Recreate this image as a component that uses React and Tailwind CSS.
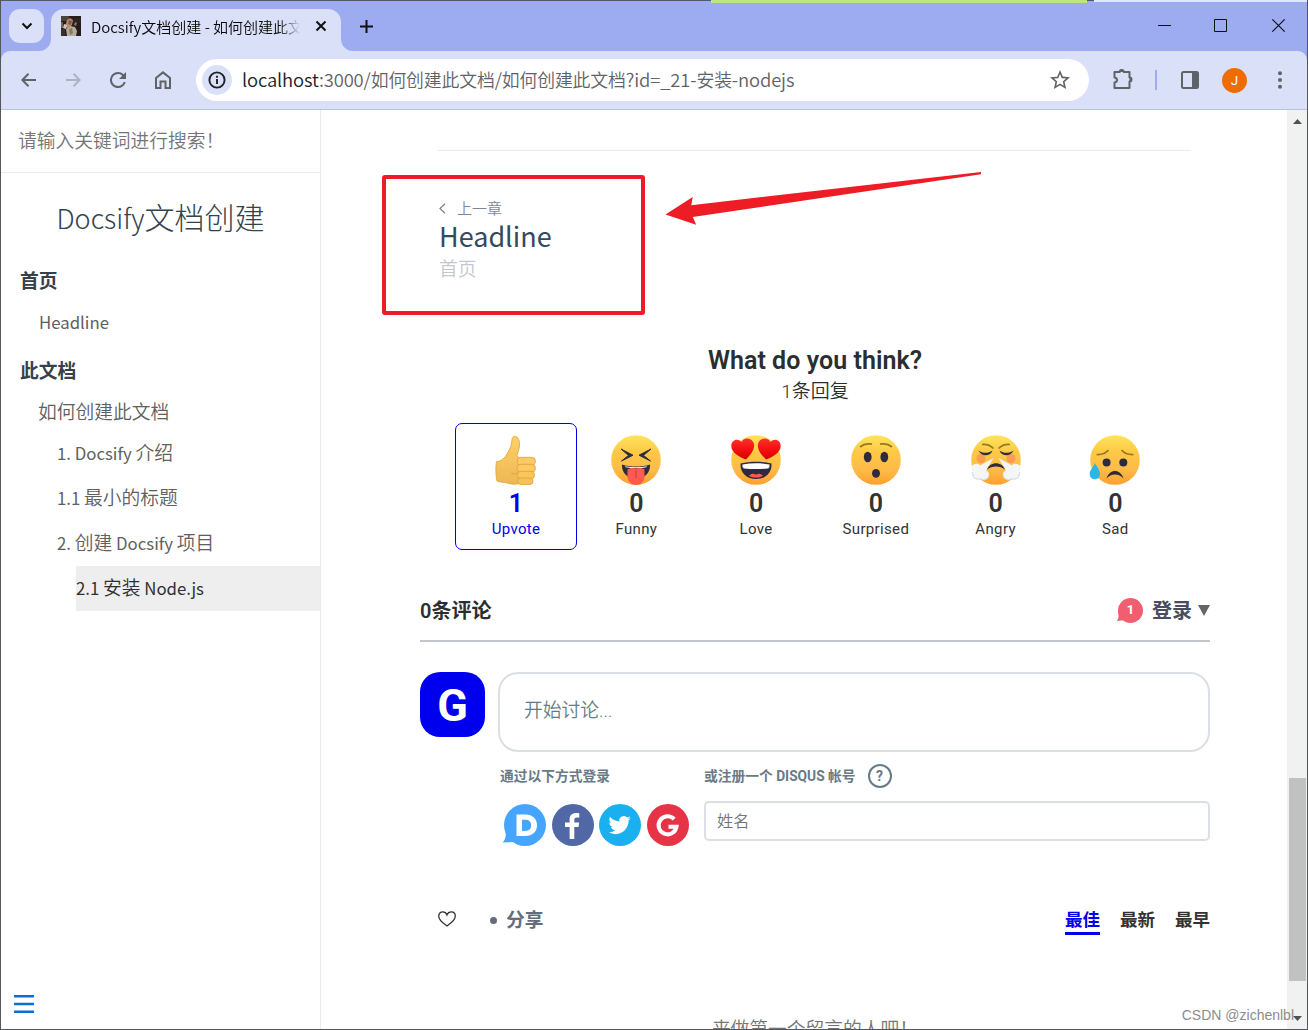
import React from "react";

const CJK = "font-['Noto_Sans_CJK_SC',sans-serif]";
const DISQUS = "font-[Roboto,'Noto_Sans_CJK_SC',sans-serif]";

function Favicon() {
  return (
    <svg width="20" height="20" viewBox="0 0 20 20" className="shrink-0">
      <rect width="20" height="20" fill="#261d1a" />
      <path d="M0 0h8v5H0z" fill="#4b443c" />
      <path d="M0 6h2v6H0z" fill="#6d625c" />
      <path d="M13 2h7v5h-7z" fill="#2c2220" />
      <path d="M14 6l2 1-1 3-2-1z" fill="#8b7460" />
      <path d="M6 4l3-2 3 2-1 5-4 3-3-1z" fill="#b58a74" />
      <path d="M8 4l3 1-1 4-3-1z" fill="#8a5644" />
      <path d="M3 8l3 1-1 4-3-1z" fill="#d8c6bb" />
      <path d="M5 13l4-3 5 1 2 4-1 5H6z" fill="#b3ac98" />
      <path d="M8 13l3-1 1 5-3 2z" fill="#857a68" />
      <path d="M0 13h4v7H0z" fill="#382e2a" />
    </svg>
  );
}

function TabStrip() {
  return (
    <div className="relative flex h-[51px] items-start bg-[#9dabf0]">
      <div className="absolute left-0 top-0 h-px w-[711px] bg-[#55586b]" />
      <div className="absolute left-[710px] top-0 h-[3px] w-[376px] bg-[#bce57a]" />
      <div className="absolute left-[1086px] top-0 h-px w-[7px] bg-[#55586b]" />
      <div className="absolute right-0 top-0 h-[2px] w-[213px] bg-[#dcebf6]" />
      <div className="ml-2 mt-[9px] flex h-[34px] w-[35px] items-center justify-center rounded-[11px] bg-[#dbe0f9]">
        <svg width="12" height="8" viewBox="0 0 12 8" fill="none" stroke="#111" strokeWidth="2">
          <path d="M1.500 1.500L6 6l4.500-4.500" />
        </svg>
      </div>
      <div className="relative ml-[7px] mt-[9px] flex h-[42px] w-[290px] items-center rounded-t-[13px] bg-[#dbe0f9] pl-[10px]">
        <svg className="absolute -left-3 bottom-0" width="12" height="12"><path d="M12 0v12H0A12 12 0 0 0 12 0z" fill="#dbe0f9" /></svg>
        <svg className="absolute -right-3 bottom-0" width="12" height="12"><path d="M0 0v12h12A12 12 0 0 1 0 0z" fill="#dbe0f9" /></svg>
        <div className="-mt-[8px]"><Favicon /></div>
        <div className={CJK + " -mt-[6px] ml-[10px] w-[210px] overflow-hidden whitespace-nowrap text-[15px] leading-6 font-[350] text-[#080808] [mask-image:linear-gradient(to_right,black_188px,transparent_209px)]"}>
          Docsify文档创建 - 如何创建此文
        </div>
        <svg className="-mt-[8px] ml-[14px]" width="12" height="12" viewBox="0 0 12 12" stroke="#111" strokeWidth="2"><path d="M1.500 1.500l9 9M10.500 1.500l-9 9" /></svg>
      </div>
      <svg className="ml-[19px] mt-[20px]" width="13" height="13" viewBox="0 0 13 13" stroke="#111" strokeWidth="2"><path d="M6.500 0v13M0 6.500h13" /></svg>
      <div className="mr-[21px] mt-[19px] ml-auto flex">
        <svg className="mr-[43px]" width="13" height="13" viewBox="0 0 13 13"><path d="M0 6h13v1H0z" fill="#111" /></svg>
        <svg className="mr-[44px]" width="13" height="13" viewBox="0 0 13 13" fill="none" stroke="#111"><path d="M.5.5h12v12H.5z" /></svg>
        <svg width="15" height="13" viewBox="-1 0 15 13" fill="none" stroke="#111" strokeWidth="1.100"><path d="M.3.3l12.400 12.400M12.700.3L.3 12.700" /></svg>
      </div>
    </div>
  );
}

function Toolbar() {
  return (
    <div className="bg-[#9dabf0]">
      <div className="flex h-[59px] items-center rounded-t-[9px] border-b border-[#b9c2dc] bg-[#dbe0f9] pl-5">
        <svg width="15" height="14" viewBox="0 0 15 14" fill="none" stroke="#5f6368" strokeWidth="2"><path d="M15 7H1.500M7.500.7L1.300 7l6.200 6.300" /></svg>
        <svg className="ml-[30px]" width="15" height="14" viewBox="0 0 15 14" fill="none" stroke="#adb2c2" strokeWidth="2"><path d="M0 7h13.500M7.500.7L13.700 7l-6.200 6.300" /></svg>
        <svg className="ml-[29px]" width="16" height="16" viewBox="4 4 16 16" fill="#5f6368"><path d="M17.650 6.350A7.960 7.960 0 0 0 12 4a8 8 0 1 0 7.730 10h-2.080A6 6 0 1 1 12 6c1.660 0 3.140.69 4.220 1.780L13 11h7V4z" /></svg>
        <svg className="ml-[28px] -mt-[1px]" width="18" height="20" viewBox="0 0 18 20" fill="none" stroke="#5f6368" strokeWidth="2"><path d="M2 8l7-5.600L16 8v10h-4.500v-6.500h-5V18H2z" /></svg>
        <div className="ml-[24px] flex h-[42px] w-[893px] items-center rounded-full bg-white">
          <div className="ml-[6px] flex size-[30px] items-center justify-center rounded-full bg-[#dbe0f9]">
            <svg width="18" height="18" viewBox="0 0 18 18" fill="none" stroke="#1f2024" strokeWidth="1.900"><circle cx="9" cy="9" r="7.600" /><path d="M9 8v5M9 4.800v2" /></svg>
          </div>
          <div className={CJK + " -mt-[2px] ml-[10px] whitespace-nowrap text-[18.400px] leading-7 font-[350] tracking-[-0.130px] text-[#5f6368]"}>
            <span className="text-[#202124]">localhost</span>:3000/<span className="text-[17.850px]">如何创建此文档</span>/<span className="text-[17.850px]">如何创建此文档</span>?id=_21-<span className="text-[17.850px]">安装</span>-nodejs
          </div>
          <svg className="mr-[19px] ml-auto" width="20" height="20" viewBox="2 2 20 20" fill="#5f6368"><path d="M22 9.240l-7.190-.62L12 2 9.190 8.630 2 9.240l5.460 4.730L5.820 21 12 17.270 18.180 21l-1.630-7.030zM12 15.400l-3.760 2.270 1-4.280-3.320-2.880 4.380-.38L12 6.100l1.710 4.040 4.380.38-3.320 2.880 1 4.280z" /></svg>
        </div>
        <svg className="ml-[23px] -mt-[2px]" width="22" height="22" viewBox="0 0 22 22"><path d="M2.500 4h5.200a2 2 0 0 1 4 0h5.800v5.600a2 2 0 0 1 0 4V20h-15v-5.500c1.500-.2 2.500-1.200 2.500-2.500S4 9.700 2.500 9.500z" fill="none" stroke="#5f6368" strokeWidth="2" strokeLinejoin="round" /><path d="M7.200 4a2.500 2.500 0 0 1 5 0zM17.500 9.200a2.500 2.500 0 0 1 0 5z" fill="#5f6368" /></svg>
        <div className="ml-[21px] h-5 w-[2px] bg-[#9dabf0]" />
        <svg className="ml-[24px]" width="18" height="18" viewBox="0 0 18 18"><rect x="1" y="1" width="16" height="16" rx="1.500" fill="none" stroke="#5f6368" strokeWidth="2" /><path d="M11 1h6v16h-6z" fill="#5f6368" /></svg>
        <div className="ml-[23px] flex size-[25px] items-center justify-center rounded-full bg-[#ef6c00] font-[Roboto,sans-serif] text-[13.500px] text-white">J</div>
        <svg className="ml-[31px]" width="4" height="18" viewBox="0 0 4 18" fill="#5f6368"><circle cx="2" cy="2.200" r="2" /><circle cx="2" cy="9" r="2" /><circle cx="2" cy="15.800" r="2" /></svg>
      </div>
    </div>
  );
}

function Latin({ children }) {
  return <span className="text-[16.800px] font-normal whitespace-pre">{children}</span>;
}

function Sidebar() {
  return (
    <aside className={CJK + " flex w-[320px] shrink-0 flex-col border-r border-[#ebebeb] text-[18.750px] font-[350] text-[#606060]"}>
      <div className="h-[63px] border-b border-[#ebebeb] pl-[17px] leading-[60px] text-[#757575]">请输入关键词进行搜索！</div>
      <h1 className="mt-[20px] text-center text-[30px] leading-[46px] font-light text-[#34424e]"><span className="text-[27px]">Docsify</span>文档创建</h1>
      <div className="mt-[23px] pl-[19px] leading-[32px] font-bold text-[#364149]">首页</div>
      <div className="mt-[9px] pl-[38px] leading-[32px]"><Latin>Headline</Latin></div>
      <div className="mt-[16px] pl-[19px] leading-[32px] font-bold text-[#364149]">此文档</div>
      <div className="mt-[9px] pl-[37px] leading-[31px]">如何创建此文档</div>
      <div className="mt-[5px] pl-[56px] leading-[41px]">
        <div className="h-[45px]"><Latin>1. Docsify </Latin>介绍</div>
        <div className="h-[45px]"><Latin>1.1 </Latin>最小的标题</div>
        <div className="h-[45px]"><Latin>2. </Latin>创建<Latin> Docsify </Latin>项目</div>
        <div className="ml-[19px] h-[45px] bg-[#eee] text-[#303030]"><Latin>2.1 </Latin>安装<Latin> Node.js</Latin></div>
      </div>
      <svg className="mt-auto mb-[16px] ml-[13px]" width="20" height="18" viewBox="0 0 20 18" fill="#0b6fd8"><path d="M0 0h20v2.500H0zM0 7.700h20v2.500H0zM0 15.500h20V18H0z" /></svg>
    </aside>
  );
}

function Pagination() {
  return (
    <div className="relative mr-[96px] ml-[117px] h-[186px] border-t border-[#ebebeb]">
      <div className={CJK + " pt-[45px] pl-px font-[350]"}>
        <div className="flex h-[25px] items-center text-[15px] text-[#7c8896]">
          <svg className="mr-[11px]" width="7" height="11" viewBox="0 0 7 11" fill="none" stroke="#7c8896" strokeWidth="1.300"><path d="M6 .7L1 5.500l5 4.800" /></svg>
          上一章
        </div>
        <div className="-mt-px text-[27px] leading-[32px] font-normal text-[#34495e]">Headline</div>
        <div className="h-[30px] text-[18.750px] leading-[31px] text-[#c3c8ce]">首页</div>
      </div>
      <div className="absolute top-[24px] -left-[56px] h-[140px] w-[263px] rounded-[3px] border-4 border-[#ee1c25]" />
      <svg className="absolute top-[20px] left-[227px]" width="318" height="56" viewBox="0 0 318 56"><path d="M.5 43.500L27.700 26l-1.400 8.200L316 1v2.200L27.800 46l3.400 7.700z" fill="#ee1c25" /></svg>
    </div>
  );
}

function FaceDisc() {
  return <circle cx="25" cy="25" r="24.800" fill="url(#face)" />;
}

const Thumb = (
  <g stroke="#d9a23f" strokeWidth=".8" strokeLinejoin="round">
    <path d="M5.500 26.500c4 .2 8-3 10.500-7.500 2.500-4.500 4.500-8 5-14 .3-4.500 3.800-4.800 5.800-2 3.200 4.500 1.500 10.500-.8 17.500L29 24v24c-4 1.700-9 1.500-13.500-.2-3-.8-6-.3-9.500-1.800-1.300-5-1.500-14-.5-19.500z" fill="url(#hand)" />
    <rect x="26" y="22.300" width="18.500" height="8" rx="4" fill="#fccb63" />
    <rect x="26" y="29.300" width="18.500" height="8" rx="4" fill="#fcca60" />
    <rect x="26.500" y="36.300" width="17" height="7.400" rx="3.500" fill="#fac65c" />
    <rect x="26.500" y="43" width="15.500" height="6.500" rx="3.200" fill="#f8c157" />
    <path d="M20 38c3 1.700 5 .8 7 0" fill="none" />
  </g>
);

const Funny = (
  <g>
    <FaceDisc />
    <path d="M10 14l12 6.200-11.500 5.800 7-5.600zM40 14l-12 6.200 11.500 5.800-7-5.600z" fill="#2e2b3d" stroke="#2e2b3d" strokeLinejoin="round" />
    <path d="M11 29.500c8 2.700 20 2.700 28 0 .5 8-5 14-14 14s-14.500-6-14-14z" fill="#2e2b3d" />
    <path d="M14 31.200c7 1.500 15 1.500 22 0l-.7 1c-6 1.300-14 1.300-20.600 0z" fill="#fff" />
    <path d="M16.500 34.500c2-2 6-2 8.500-.7 2.500-1.300 6.500-1.300 8.500.7V41c0 12-17 12-17 0z" fill="#ff5a52" />
    <path d="M25 35v8" stroke="#d63d42" strokeWidth="1.200" />
  </g>
);

const Love = (
  <g>
    <FaceDisc />
    <path d="M15 24.500C8 22 .5 17.500.3 11.300.2 5 6.500 2.600 10.700 7 12 2.500 20 2 22.500 7.500 25 13.500 19.500 20 15 24.500z" fill="url(#red)" />
    <path d="M35 24.500c7-2.500 14.500-7 14.700-13.200.1-6.300-6.200-8.700-10.400-4.300C38 2.500 30 2 27.500 7.500 25 13.500 30.500 20 35 24.500z" fill="url(#red)" />
    <path d="M9.500 28.500c10-2.200 21-2.200 31 0C41 38 34.500 44 25 44S9 38 9.500 28.500z" fill="#2e2b3d" />
    <path d="M11.500 29.500c9-1.700 18-1.700 27 0 .3 2.500-.5 3.800-1.500 4-8 .8-16 .8-24 0-1-.2-1.800-1.500-1.500-4z" fill="#fff" />
    <path d="M18 40.700c3-2.700 5-2 7-1 2-1 4-1.700 7 1-3.500 2.500-10.500 2.500-14 0z" fill="#ff5a52" />
  </g>
);

const Surprised = (
  <g>
    <FaceDisc />
    <ellipse cx="16.700" cy="22" rx="3.900" ry="5.300" fill="#2e2b3d" />
    <ellipse cx="33.300" cy="22" rx="3.900" ry="5.300" fill="#2e2b3d" />
    <ellipse cx="25" cy="38.300" rx="4" ry="4.400" fill="#2e2b3d" />
    <path d="M9 12c3-2.500 7.500-3.700 12-2.800M41 12c-3-2.500-7.500-3.700-12-2.800" fill="none" stroke="#967a1e" strokeWidth="1.700" />
  </g>
);

const Angry = (
  <g>
    <FaceDisc />
    <circle cx="10" cy="23.500" r="4.500" fill="#f4775a" opacity=".5" />
    <circle cx="40" cy="23.500" r="4.500" fill="#f4775a" opacity=".5" />
    <path d="M7.500 15.500c4 3 9.500 3.300 14 0-1.500 6-11.500 6.500-14 0zM42.500 15.500c-4 3-9.500 3.300-14 0 1.500 6 11.500 6.500 14 0z" fill="#2e2b3d" />
    <path d="M11 9.500c4-.5 8 .5 11.500 4M39 9.500c-4-.5-8 .5-11.500 4" fill="none" stroke="#967a1e" strokeWidth="1.600" />
    <path d="M22.500 23L9 30.500c-1-2.500-6-2.500-8 .5-1.500 3 0 5.500 1 6.500-1 3 0 6 3 6.500h5c3 2.500 8 0 8-4.500 0-2-1.500-3.500-3-4z" fill="#f3f5f7" />
    <path d="M27.500 23L41 30.500c1-2.500 6-2.500 8 .5 1.500 3 0 5.500-1 6.500 1 3 0 6-3 6.500h-5c-3 2.500-8 0-8-4.500 0-2 1.500-3.500 3-4z" fill="#f3f5f7" />
    <path d="M1 37c1 3 1 6 4 6.800 1.500.5 3.500.2 5 .2 3 2.500 8 0 8-4.500M49 37c-1 3-1 6-4 6.800-1.500.5-3.500.2-5 .2-3 2.500-8 0-8-4.500" fill="none" stroke="#ccd6de" />
    <path d="M16 34.500c3-8.500 15-8.500 18 0-5-4-13-4-18 0z" fill="#2e2b3d" />
  </g>
);

const Sad = (
  <g>
    <FaceDisc />
    <circle cx="16.600" cy="27.500" r="4" fill="#2e2b3d" />
    <circle cx="33.300" cy="27.500" r="4" fill="#2e2b3d" />
    <path d="M16.500 43.500c3-10 14-10 17 0-4.500-5.500-12.500-5.500-17 0z" fill="#2e2b3d" />
    <path d="M6.500 19.500c5 .3 9-1 12-4.500M43.500 19.500c-5 .3-9-1-12-4.500" fill="none" stroke="#967a1e" strokeWidth="1.700" />
    <path d="M5 28c2 4 5 7 5 11 0 7-10.300 7-10.300 0C-.3 35 3.500 32 5 28z" fill="#28b8e8" />
  </g>
);

const reactions = [
  { art: Thumb, count: 1, label: "Upvote" },
  { art: Funny, count: 0, label: "Funny" },
  { art: Love, count: 0, label: "Love" },
  { art: Surprised, count: 0, label: "Surprised" },
  { art: Angry, count: 0, label: "Angry" },
  { art: Sad, count: 0, label: "Sad" },
];

function Reactions() {
  return (
    <section className={DISQUS + " text-center text-[#2a2e2e]"}>
      <svg width="0" height="0" className="absolute">
        <defs>
          <linearGradient id="face" x2="0" y2="1"><stop offset="0" stopColor="#ffe45c" /><stop offset=".35" stopColor="#fdc845" /><stop offset=".7" stopColor="#febb48" /><stop offset="1" stopColor="#ff9f2b" /></linearGradient>
          <linearGradient id="hand" x2="0" y2="1"><stop offset="0" stopColor="#ffd064" /><stop offset="1" stopColor="#eeb755" /></linearGradient>
          <linearGradient id="red" x2="0" y2="1"><stop offset="0" stopColor="#ff3030" /><stop offset=".5" stopColor="#f51010" /><stop offset="1" stopColor="#d60000" /></linearGradient>
        </defs>
      </svg>
      <h2 className="pt-[9px] pl-[22px] text-[25px] leading-[32px] font-semibold tracking-[0.050px]">What do you think?</h2>
      <p className="pl-[22px] text-[19px] leading-[30px] font-[350]">1条回复</p>
      <div className="mt-[16px] flex h-[127px] pl-[135px]">
        {reactions.map((r, i) => (
          <div
            key={r.label}
            className={
              i === 0
                ? "-mr-px -ml-px flex w-[122px] flex-col items-center rounded-[7px] border border-[#0000e6] pt-[11px] text-[#0000ee]"
                : "flex w-[119.750px] flex-col items-center pt-[12px] pl-px text-[#333]"
            }
          >
            <svg width="50" height="50" viewBox="0 0 50 50" className="shrink-0 overflow-visible">{r.art}</svg>
            <div className="mt-[5px] text-[25px] leading-[28px] font-semibold">{r.count}</div>
            <div className="text-[15px] leading-[22px] font-[380] tracking-[0.350px]">{r.label}</div>
          </div>
        ))}
      </div>
    </section>
  );
}

function SocialButtons() {
  return (
    <div className="mt-[15px] flex gap-[5.600px] pl-[5px]">
      <svg width="42" height="42" viewBox="0 0 42 42" className="overflow-visible"><circle cx="21" cy="21" r="21" fill="#45a5ff" /><path d="M1.500 27.500c.7 4.500 0 8-2.800 11L11 38z" fill="#45a5ff" /><path fillRule="evenodd" d="M12.500 10.500h9c7 0 11.500 4.300 11.500 10.800S28.500 32 21.500 32h-9zM18 15.700v11.200h3.200c3.800 0 6-2 6-5.600s-2.200-5.600-6-5.600z" fill="#fff" /></svg>
      <svg width="42" height="42" viewBox="0 0 42 42"><circle cx="21" cy="21" r="21" fill="#5068a6" /><path d="M17.600 35V23H13v-4.500h4.600v-3.300c0-4 2.600-6.200 6.300-6.200 1.300 0 2.600.1 3.400.3v4.200h-2.500c-2 0-2.500 1-2.500 2.500v2.500h4.900l-.7 4.500h-4.200v12z" fill="#fff" /></svg>
      <svg width="42" height="42" viewBox="0 0 42 42"><circle cx="21" cy="21" r="21" fill="#1ab0ef" /><path transform="translate(9.500 9.900) scale(.93)" d="M23.950 4.570a10 10 0 0 1-2.820.77 4.960 4.960 0 0 0 2.160-2.720c-.95.55-2 .95-3.130 1.180a4.920 4.920 0 0 0-8.380 4.480C7.690 8.090 4.070 6.130 1.640 3.160a4.820 4.820 0 0 0-.67 2.470c0 1.710.87 3.210 2.190 4.100a4.900 4.900 0 0 1-2.230-.62v.06a4.920 4.920 0 0 0 3.950 4.830 5 5 0 0 1-2.210.08 4.940 4.940 0 0 0 4.600 3.420A9.870 9.870 0 0 1 0 19.540a13.990 13.990 0 0 0 7.550 2.210c9.050 0 14-7.500 14-13.990 0-.21 0-.42-.02-.63a9.940 9.940 0 0 0 2.460-2.550z" fill="#fff" /></svg>
      <svg width="42" height="42" viewBox="0 0 42 42"><circle cx="21" cy="21" r="21" fill="#e63346" /><path d="M27.200 15.200a9 9 0 1 0 2.300 7.500h-8" fill="none" stroke="#fff" strokeWidth="4" /></svg>
    </div>
  );
}

function Comments() {
  return (
    <section className={DISQUS + " mr-[77px] ml-[99px] text-[#2a2e2e]"}>
      <div className="mt-[30px] flex h-[62px] items-start border-b-2 border-[#c2c6cc] pt-[15px] leading-[30px]">
        <div className="pt-px text-[20px] font-semibold">0条评论</div>
        <div className="ml-auto flex items-center text-[20px] font-bold text-[#494e58]">
          <div className="relative -mt-px mr-[9px] flex size-[25px] items-center justify-center rounded-full bg-[#f05f70] text-[13px] font-bold text-white">
            <svg className="absolute bottom-[2px] -left-px" width="9" height="10"><path d="M1 0c1 4 1 6-1 10l9-1z" fill="#f05f70" /></svg>
            <span className="relative">1</span>
          </div>
          <span className="pt-px">登录</span>
          <svg className="ml-[6px]" width="12" height="11" viewBox="0 0 12 11"><path d="M0 0h12L6 11z" fill="#656565" /></svg>
        </div>
      </div>
      <div className="mt-[30px] flex items-start">
        <div className="flex size-[65px] items-center justify-center rounded-[20px] bg-[#0000ee] pt-[2px] text-[45px] font-bold text-white">G</div>
        <div className="ml-[13px] h-[80px] w-[712px] rounded-[20px] border-2 border-[#dbdfe4] pl-[24px] text-[18.750px] leading-[75px] font-[350] text-[#687a86]">开始讨论...</div>
      </div>
      <div className="ml-[79px] flex text-[13.750px] font-bold text-[#687a86]">
        <div className="w-[205px]">
          <div className="mt-[12px] h-[25px] pl-px leading-[25px]">通过以下方式登录</div>
          <SocialButtons />
        </div>
        <div className="flex-1">
          <div className="mt-[11px] flex h-[26px] items-center leading-[26px]">
            或注册一个 DISQUS 帐号
            <span className="ml-[12px] flex size-[24px] items-center justify-center rounded-full border-2 border-[#687a86] text-[14px] leading-none">?</span>
          </div>
          <div className="mt-[12px] h-[40px] rounded-[5px] border-2 border-[#dbdfe4] pl-[11px] text-[16.250px] leading-[38px] font-[350] text-[#757575]">姓名</div>
        </div>
      </div>
      <div className="mt-[58px] flex h-[31px] items-center text-[18px] leading-[34px] font-bold text-[#333]">
        <svg className="-mt-[1px] ml-[18px]" width="18" height="16" viewBox="0 0 18 16" fill="none" stroke="#333" strokeWidth="1.300"><path d="M9 15C5 12 .7 9.300.7 5.200.7 2.500 2.500.8 4.700.8 6.900.8 8.400 2.200 9 3.800 9.600 2.200 11.100.8 13.300.8c2.200 0 4 1.700 4 4.400C17.300 9.300 13 12 9 15z" /></svg>
        <div className="mt-[1px] ml-[34px] size-[7px] rounded-full bg-[#656c7e]" />
        <div className="ml-[9px] h-[31px] text-[18.750px] text-[#656c7e]">分享</div>
        <div className="ml-auto flex gap-[20px] text-[17.500px] leading-[33px]">
          <span className="h-[31px] border-b-[3px] border-[#0000ee] text-[#0000ee]">最佳</span>
          <span className="h-[31px]">最新</span>
          <span className="h-[31px]">最早</span>
        </div>
      </div>
      <p className="mt-[80px] text-center text-[18.750px] leading-[30px] font-[350] text-[#757575]">来做第一个留言的人吧！</p>
    </section>
  );
}

function Scrollbar() {
  return (
    <div className="flex w-5 shrink-0 flex-col items-center bg-[#f1f1f1]">
      <svg className="mt-[9px]" width="9" height="5"><path d="M0 5l4.500-5L9 5z" fill="#505050" /></svg>
      <div className="mt-[654px] h-[203px] w-[17px] bg-[#c1c1c1]" />
      <svg className="mt-auto mb-[8px]" width="9" height="5"><path d="M0 0l4.500 5L9 0z" fill="#505050" /></svg>
    </div>
  );
}

export default function App() {
  return (
    <div className="relative flex h-[1030px] w-[1308px] flex-col overflow-hidden border-r border-b border-l border-[#55565c] bg-white">
      <TabStrip />
      <Toolbar />
      <div className="flex min-h-0 flex-1">
        <Sidebar />
        <main className="min-w-0 flex-1 overflow-hidden pt-[40px]">
          <Pagination />
          <Reactions />
          <Comments />
        </main>
        <Scrollbar />
      </div>
      <div className="absolute right-[13px] bottom-[4px] font-['Liberation_Sans',sans-serif] text-[14px] leading-5 whitespace-nowrap text-[#8c8c8c]">CSDN @zichenlbl</div>
    </div>
  );
}
